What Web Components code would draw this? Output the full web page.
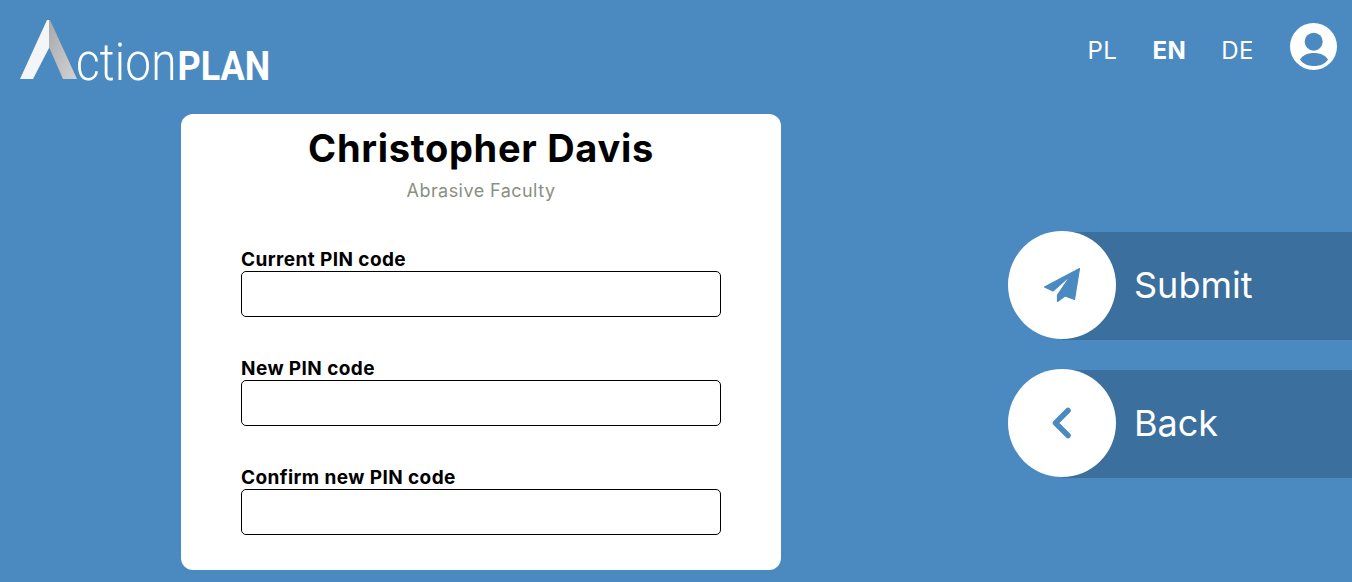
<!DOCTYPE html>
<html><head><meta charset="utf-8"><style>
html,body{margin:0;height:582px;overflow:hidden;background:#4a8ac1;font-family:Inter,sans-serif}
</style></head><body>
<ap-page>
<ap-header></ap-header>
<ap-card slot="card" name="Christopher Davis" role="Abrasive Faculty">
<ap-field label="Current PIN code"></ap-field>
<ap-field label="New PIN code"></ap-field>
<ap-field label="Confirm new PIN code"></ap-field>
</ap-card>
<ap-action slot="actions" label="Submit" icon="send"></ap-action>
<ap-action slot="actions" label="Back" icon="back"></ap-action>
</ap-page>
<script>
const def=(n,html)=>customElements.define(n,class extends HTMLElement{connectedCallback(){if(this.shadowRoot)return;const s=this.attachShadow({mode:'open'});s.innerHTML=typeof html==='function'?html(this):html;}});
def('ap-page',`<style>:host{display:block;width:1352px;height:582px;overflow:hidden}
.main{display:flex;padding-left:181px;align-items:flex-start}
.side{margin-left:auto;width:344px;display:flex;flex-direction:column;gap:30px;padding-top:118px}
</style><slot></slot><div class="main"><slot name="card"></slot><div class="side"><slot name="actions"></slot></div></div>`);
def('ap-header',`<style>:host{display:flex;height:114px;box-sizing:border-box;padding:20px 15px 0 20px;justify-content:space-between;align-items:flex-start;color:#fff}
.logo{height:60px;position:relative;width:250px}
.logo svg{display:block}
.txt{position:absolute;left:56px;top:19px;white-space:nowrap;transform-origin:0 0;transform:scaleX(.9);font:300 51px/48px Roboto,sans-serif;letter-spacing:.2px}
.txt b{font-weight:700;font-size:40px;letter-spacing:0;margin-left:1px}
nav{display:flex;align-items:center;gap:35px;font-size:24px;letter-spacing:.5px;line-height:29px;margin-top:16px}
nav span{display:block}
nav .on{font-weight:700}
.r{display:flex;align-items:flex-start;gap:36px}
.user{margin-top:3px}
</style>
<div class="logo"><svg width="60" height="60" viewBox="0 0 60 60"><defs><linearGradient id="g" x1="0" y1="0" x2="1" y2="1"><stop offset="0" stop-color="#a9a8aa"/><stop offset="1" stop-color="#d4d3d4"/></linearGradient></defs>
<path d="M0 59 L27 0 L29 0 L29 28 L13 59Z" fill="#f3f5f7"/><path d="M29 0 L30 0 L57 59 L43 59 L29 27Z" fill="url(#g)"/></svg>
<div class="txt">ction<b>PLAN</b></div></div>
<div class="r"><nav><span>PL</span><span class="on">EN</span><span>DE</span></nav>
<svg class="user" width="47" height="47" viewBox="0 0 47 47"><circle cx="23.5" cy="23.5" r="23.5" fill="#fff"/><circle cx="23.7" cy="18.7" r="9" fill="#4a8ac1"/><path d="M10 36.5 C13 32 18 30 24 30 C30 30 35 32 38 36.5 C35 41 30 43 24 43 C18 43 13 41 10 36.5Z" fill="#4a8ac1"/></svg></div>`);
def('ap-card',h=>`<style>:host{display:block;box-sizing:border-box;width:600px;height:456px;background:#fff;border-radius:12px;padding:12px 60px 0}
h1{margin:0;font-size:38px;letter-spacing:.7px;line-height:45px;font-weight:700;text-align:center;color:#000}
p{margin:9px 0 0;font-size:18px;letter-spacing:.45px;line-height:22px;text-align:center;color:#8a8f84}
.f{display:flex;flex-direction:column;gap:29px;margin-top:46px}
</style><h1>${h.getAttribute('name')}</h1><p>${h.getAttribute('role')}</p><div class="f"><slot></slot></div>`);
def('ap-field',h=>`<style>:host{display:block;height:80px}
label{display:block;font-size:19px;letter-spacing:.42px;line-height:23px;font-weight:700;color:#000;height:24px;margin-bottom:-1px}
input{display:block;box-sizing:border-box;width:480px;height:46px;border:1px solid #000;border-radius:5px;background:#fff;margin:0;padding:0 8px;outline:0}
</style><label>${h.getAttribute('label')}</label><input type="text">`);
const icons={send:`<path d="M42.5 8.5 L7.5 27 L16 31 L34 15 L20.5 35 L20.5 41.5 L28 36 L37.5 39.5Z" fill="#4a8ac1" stroke="#4a8ac1" stroke-width="1.2" stroke-linejoin="round"/>`,
back:`<path d="M31 12.5 L18.5 25 L31 37.5" fill="none" stroke="#4a8ac1" stroke-width="5.5" stroke-linecap="round" stroke-linejoin="round"/>`};
def('ap-action',h=>`<style>:host{display:block;height:108px;position:relative}
.bar{margin-left:54px;height:108px;box-sizing:border-box;padding-bottom:2px;background:#3b6f9d;display:flex;align-items:center;padding-left:72px;color:#fff;font-size:36px;line-height:40px}
.c{position:absolute;left:0;top:-1px;width:108px;height:108px;border-radius:50%;background:#fff;display:flex;align-items:center;justify-content:center}
svg{display:block}
</style><div class="bar">${h.getAttribute('label')}</div><div class="c"><svg width="50" height="50" viewBox="0 0 50 50">${icons[h.getAttribute('icon')]}</svg></div>`);
</script></body></html>
